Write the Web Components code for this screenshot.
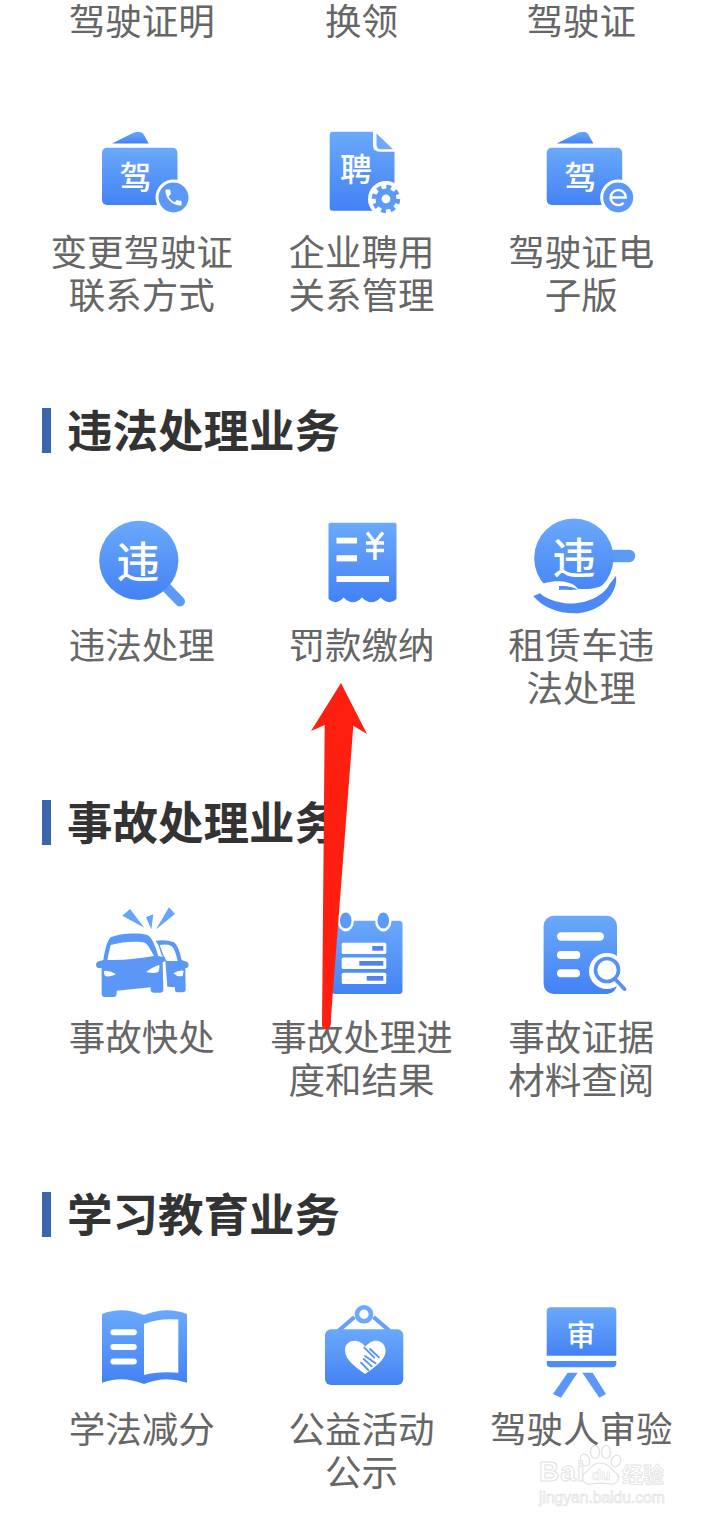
<!DOCTYPE html>
<html lang="zh">
<head>
<meta charset="utf-8">
<title>业务</title>
<style>
html, body { margin: 0; background: #fff; }
body { width: 703px; height: 1519px; overflow: hidden; position: relative; font-family: "Noto Sans CJK SC", "Noto Sans", sans-serif; }
</style>
</head>
<body>
<service-section>
  <service-item>驾驶证明</service-item>
  <service-item>换领</service-item>
  <service-item>驾驶证</service-item>
  <service-item icon="licensePhone">变更驾驶证<br>联系方式</service-item>
  <service-item icon="hire">企业聘用<br>关系管理</service-item>
  <service-item icon="licenseE">驾驶证电<br>子版</service-item>
</service-section>
<service-section heading="违法处理业务">
  <service-item icon="search">违法处理</service-item>
  <service-item icon="receipt">罚款缴纳</service-item>
  <service-item icon="hand">租赁车违<br>法处理</service-item>
</service-section>
<service-section heading="事故处理业务">
  <service-item icon="cars">事故快处</service-item>
  <service-item icon="calendar">事故处理进<br>度和结果</service-item>
  <service-item icon="evidence">事故证据<br>材料查阅</service-item>
</service-section>
<service-section heading="学习教育业务">
  <service-item icon="book">学法减分</service-item>
  <service-item icon="heart">公益活动<br>公示</service-item>
  <service-item icon="board">驾驶人审验</service-item>
</service-section>
<baidu-mark></baidu-mark>
<red-arrow></red-arrow>

<script>
// icons are drawn on a 100x100 box, overflow is left visible
const W = "#fff";
const glyph = (t, x, y, size) => `<text x="${x}" y="${y}" font-size="${size}" font-weight="500" fill="${W}" text-anchor="middle" dominant-baseline="central" font-family="'Noto Sans CJK SC', sans-serif">${t}</text>`;
const wallet = (dx, badge) => `<g transform="translate(${dx} 0)">
  <path fill="url(#g)" d="M20 23.5 L42 12.6 Q49 10 52 15 L56.7 23.5 Z"/>
  <rect x="10" y="27.7" width="75.5" height="57.3" rx="5" fill="url(#g)"/>
  ${glyph("驾", 43.5, 55, 32)}
  <circle cx="81.5" cy="77.5" r="18" fill="${W}"/>
  <circle cx="81.5" cy="77.5" r="15" fill="#5b98f7"/>
  ${badge}
</g>`;

const ICONS = {
  licensePhone: wallet(0, `<path fill="${W}" transform="translate(70.7 66.7) scale(.9)" d="M6.62 10.79c1.44 2.83 3.76 5.14 6.59 6.59l2.2-2.2c.27-.27.67-.36 1.02-.24 1.12.37 2.33.57 3.57.57.55 0 1 .45 1 1V20c0 .55-.45 1-1 1-9.39 0-17-7.61-17-17 0-.55.45-1 1-1h3.5c.55 0 1 .45 1 1 0 1.25.2 2.45.57 3.57.11.35.03.74-.25 1.02l-2.2 2.2z"/>`),
  licenseE: wallet(5.7, `<path fill="none" stroke="${W}" stroke-width="2.4" d="M74 77.5 H89 A7.5 7.5 0 1 0 86.9 82.8"/>`),
  hire: `<path fill="url(#g)" d="M20.7 11.7 H61 V25 Q61 31.7 67.7 31.7 H82.5 V87.7 Q82.5 90.7 79.5 90.7 H20.7 Q17.7 90.7 17.7 87.7 V14.7 Q17.7 11.7 20.7 11.7 Z"/>
    <path fill="#6aa9fb" d="M64.5 13.5 L81 29.3 H69 Q64.5 29.3 64.5 24.8 Z"/>
    ${glyph("聘", 44, 46.7, 32)}
    <circle cx="74" cy="79" r="18" fill="${W}"/>
    <circle cx="74" cy="79" r="10.5" fill="#5c9af8"/>
    <circle cx="74" cy="79" r="12" fill="none" stroke="#5c9af8" stroke-width="4.5" stroke-dasharray="4.7 4.72"/>
    <circle cx="74" cy="79" r="4.4" fill="${W}"/>`,
  search: `<path d="M74 74 L88 88.5" stroke="#5c9af8" stroke-width="10" stroke-linecap="round"/>
    <circle cx="46.8" cy="47.3" r="39.6" fill="url(#g)"/>
    ${glyph("违", 46, 46, 43)}`,
  receipt: `<path fill="url(#g)" d="M18 9.7 H83 Q84.5 9.7 84.5 11.2 V86 Q77 93 68.7 84.5 Q59.5 94 50 84.5 Q41 94 31.6 84.5 Q24 93 16.5 86 V11.2 Q16.5 9.7 18 9.7 Z"/>
    <rect x="24.5" y="24.7" width="20.5" height="5.8" fill="${W}"/>
    <rect x="24.5" y="42.2" width="20.5" height="6.2" fill="${W}"/>
    <rect x="24.5" y="63" width="52.5" height="6" fill="${W}"/>
    <path fill="none" stroke="${W}" stroke-width="3.4" d="M55 19.5 L63 29.5 L71 19.5 M54 30 H72 M54 37.5 H72 M63 29.5 V47"/>`,
  hand: `<path d="M76 43 H98" stroke="#5c9af8" stroke-width="12.5" stroke-linecap="round"/>
    <circle cx="42.8" cy="45" r="39.6" fill="url(#g)"/>
    ${glyph("违", 43, 42, 43)}
    <path fill="${W}" d="M0.7 75.3 C10.7 70.3 20.7 67.7 29 68.3 C39 69 44 72 46.7 75.7 C57.3 77 69 75.3 77.3 68.7 L90.7 58.7 V110 H-5 Z"/>
    <path fill="#4f8cf6" d="M28 73 C36 72.5 44 74.5 46.7 76.5 C40 77.5 33 76.5 28 77 Z"/>
    <path fill="#4c89f5" d="M2.3 83 C14 97 34 102 50.7 99.7 C70.7 97 87.3 80.3 85 62.7 L78 72 C70.7 85.3 50.7 92 34 90.3 C24 88.7 14 85.3 9 80.3 Z"/>`,
  cars: `<g fill="#5a97f6" transform="translate(-2 -5) scale(.3333)">
      <path fill="#66a5fa" d="M97 47 L120 27 L163 83 Z M168 52 L190 43 L184 88 Z M237 22 L255 42 L198 88 Z"/>
      <path fill-rule="evenodd" d="M197 122 Q230 118 252 127 Q265 135 275 180 L292 186 Q300 195 292 203 L286 205 L287 268 Q287 277 278 277 L262 277 Q255 277 255 270 L255 262 L232 260 L226 183 L215 165 L205 135 Z M209 135 Q235 130 247 140 Q256 150 263 183 L230 183 L220 165 Z M250 220 Q265 210 281 212 L278 228 Q262 232 250 220 Z"/>
      <path fill-rule="evenodd" d="M62 112 C90 100 140 97 172 105 C185 110 195 135 205 168 L222 172 Q230 180 222 186 L218 186 L220 270 Q220 278 210 278 L190 278 Q182 278 182 268 L182 262 L80 272 L80 282 Q80 291 70 291 L45 291 Q35 291 35 281 L35 205 L22 203 Q14 195 22 185 L40 180 C45 150 50 125 62 112 Z M62 135 C95 125 140 122 165 128 C175 135 185 155 192 168 C150 175 100 182 52 180 C55 165 58 150 62 135 Z M42 213 Q60 210 78 223 Q60 232 45 228 Q40 220 42 213 Z M208 195 Q190 200 168 216 Q190 222 205 216 Q210 205 208 195 Z"/>
    </g>`,
  calendar: `<rect x="19.7" y="15.7" width="70.8" height="73.3" rx="3.5" fill="url(#g)"/>
    <ellipse cx="33.7" cy="15.5" rx="8.2" ry="11" fill="${W}"/><ellipse cx="71.3" cy="15.5" rx="8.2" ry="11" fill="${W}"/>
    <ellipse cx="33.7" cy="15.5" rx="5.8" ry="8" fill="#5c9af8"/><ellipse cx="71.3" cy="15.5" rx="5.8" ry="8" fill="#5c9af8"/>
    <g fill="${W}"><rect x="29.7" y="37.7" width="44.6" height="11.3" rx="1.5"/><rect x="29.7" y="52.5" width="44.6" height="11.5" rx="1.5"/><rect x="29.7" y="67.7" width="44.6" height="11.3" rx="1.5"/></g>
    <g fill="#5083ee"><rect x="60.3" y="41" width="11" height="4.7"/><rect x="47.3" y="56" width="24" height="4.7"/><rect x="54.7" y="71" width="16.6" height="4.7"/></g>`,
  evidence: `<rect x="12.6" y="10.7" width="73.4" height="78.3" rx="10" fill="url(#g)"/>
    <g fill="${W}"><rect x="26" y="27.3" width="47" height="8.4" rx="4.2"/><rect x="26" y="46" width="23.3" height="8" rx="4"/><rect x="26" y="64.3" width="23" height="8" rx="4"/></g>
    <circle cx="76" cy="66" r="18" fill="${W}"/>
    <circle cx="76" cy="65" r="11.5" fill="${W}" stroke="#5590f6" stroke-width="3.6"/>
    <path d="M84.5 74.5 L93.5 84" stroke="#5590f6" stroke-width="3.8" stroke-linecap="round"/>`,
  book: `<path fill="url(#g)" d="M10 17 Q30 9 52 18 Q74 9 95 17 V85.7 Q74 78 52 87 Q30 78 10 85.7 Z"/>
    <path fill="${W}" d="M52 27 Q66 21 86.3 22.5 V75.7 Q66 74 52 78 Z"/>
    <g fill="${W}"><rect x="18.4" y="32.3" width="26.4" height="6" rx="3"/><rect x="18.4" y="47" width="26.4" height="6" rx="3"/><rect x="18.4" y="61.5" width="26.4" height="6" rx="3"/></g>`,
  heart: `<path d="M42.5 20 L24 36 M61.5 20 L80 36" stroke="#659ff9" stroke-width="4.2"/>
    <circle cx="52" cy="17.3" r="7" fill="${W}" stroke="#6aa9fb" stroke-width="4.6"/>
    <rect x="13" y="32.3" width="78.3" height="55.7" rx="6" fill="url(#g)"/>
    <g transform="translate(3 -2) scale(.3333)">
      <path fill="${W}" d="M150 237 C120 215 90 195 90 165 C90 145 105 137 120 137 C135 137 148 150 150 155 C160 145 170 137 183 137 C200 137 212 150 212 168 C212 195 175 220 150 237 Z"/>
      <path fill="none" stroke="#5792f7" stroke-width="5.5" stroke-linecap="round" d="M148 158 L178 188 M165 162 L192 187 M150 183 L182 205 M138 203 L160 225 M146 192 L170 214"/>
    </g>`,
  board: `<path fill="url(#g)" d="M19.7 10.3 H81.3 Q85.3 10.3 85.3 14.3 V58.7 H15.7 V14.3 Q15.7 10.3 19.7 10.3 Z"/>
    ${glyph("审", 50, 35.5, 29)}
    <path fill="#4f8cf6" d="M15.7 64 H85.3 V66.3 Q85.3 70.3 81.3 70.3 H19.7 Q15.7 70.3 15.7 66.3 Z"/>
    <path fill="#5a97f6" d="M36.7 75.7 H46.6 L30 100.7 L22 97 Z M51.3 75.7 H61.6 L75 97 L68.3 100.7 Z"/>`
};

class ServiceIcon extends HTMLElement {
  connectedCallback() {
    this.attachShadow({ mode: "open" }).innerHTML = `
      <style>
      :host { display: block; width: 100px; height: 100px; }
      svg { display: block; overflow: visible; }
      </style>
      <svg width="100" height="100" viewBox="0 0 100 100">
        <defs><linearGradient id="g" x1="0" y1="0" x2="0" y2="1"><stop offset="0" stop-color="#6aa9fb"/><stop offset="1" stop-color="#4482f5"/></linearGradient></defs>
        ${ICONS[this.getAttribute("name")] || ""}
      </svg>`;
  }
}
customElements.define("service-icon", ServiceIcon);

class ServiceItem extends HTMLElement {
  connectedCallback() {
    const name = this.getAttribute("icon");
    this.attachShadow({ mode: "open" }).innerHTML = `
      <style>
      :host { display: flex; flex-direction: column; align-items: center; text-align: center; font-size: 36.5px; line-height: 43px; color: #666; white-space: nowrap; }
      service-icon { margin-bottom: 11px; }
      .label { margin: -2px 0 2px; }
      </style>
      ${name ? `<service-icon name="${name}"></service-icon>` : ""}
      <div class="label"><slot></slot></div>`;
  }
}
customElements.define("service-item", ServiceItem);

class ServiceSection extends HTMLElement {
  connectedCallback() {
    const heading = this.getAttribute("heading");
    this.attachShadow({ mode: "open" }).innerHTML = `
      <style>
      :host { display: block; padding: 0 12px 90px 32px; }
      :host(:first-of-type) { padding-bottom: 91px; }
      h2 { margin: 0 0 60px 10px; height: 45px; display: flex; align-items: center; gap: 16px; font-size: 45.5px; line-height: 45px; font-weight: 700; color: #333; }
      h2::before { content: ""; width: 9px; height: 45px; background: #3a66ab; }
      h2 span { padding-bottom: 4px; }
      .grid { display: grid; grid-template-columns: repeat(3, 219.7px); row-gap: 77px; align-items: start; }
      </style>
      ${heading ? `<h2><span>${heading}</span></h2>` : ""}
      <div class="grid"><slot></slot></div>`;
  }
}
customElements.define("service-section", ServiceSection);

// screenshot overlay: hand drawn arrow
class RedArrow extends HTMLElement {
  connectedCallback() {
    this.attachShadow({ mode: "open" }).innerHTML = `
      <style>
      :host { position: absolute; left: 0; top: 0; width: 703px; height: 1519px; pointer-events: none; }
      svg { display: block; }
      </style>
      <svg width="703" height="1519" viewBox="0 0 703 1519">
        <path fill="#fe1f10" d="M341 683 L367 734 L353.3 725.7 L332.3 1000 L330.5 1026 Q326 1033 322 1026 L324.7 725 L311 731 Z"/>
      </svg>`;
  }
}
customElements.define("red-arrow", RedArrow);

// watermark bottom right
class BaiduMark extends HTMLElement {
  connectedCallback() {
    this.attachShadow({ mode: "open" }).innerHTML = `
      <style>
      :host { position: absolute; left: 538px; top: 1443px; width: 130px; height: 62px; font-family: "Liberation Sans", sans-serif; color: #fff; -webkit-text-stroke: 1px #e2e2e2; }
      .b { position: absolute; left: 1px; top: 14px; font-size: 28px; line-height: 30px; font-weight: 700; letter-spacing: 1px; }
      .j { position: absolute; left: 1px; top: 45px; font-size: 15.6px; line-height: 20px; -webkit-text-stroke: .7px #e2e2e2; }
      .c { position: absolute; left: 84px; top: 17px; font: 700 21px/26px "Noto Sans CJK SC", sans-serif; -webkit-text-stroke: .8px #e2e2e2; }
      .d { position: absolute; left: 54px; top: 24px; font-size: 15px; line-height: 16px; font-weight: 700; -webkit-text-stroke: .6px #e2e2e2; }
      svg { position: absolute; left: 0; top: 0; }
      </style>
      <svg width="130" height="44" viewBox="0 0 130 44" fill="#fff" stroke="#e2e2e2" stroke-width="1.2">
        <ellipse cx="47" cy="17" rx="4.5" ry="6" transform="rotate(-25 47 17)"/>
        <ellipse cx="57" cy="9" rx="4.5" ry="6.5"/>
        <ellipse cx="68" cy="9" rx="4.5" ry="6.5"/>
        <ellipse cx="78" cy="18" rx="4.5" ry="6" transform="rotate(25 78 18)"/>
        <path d="M62 20 C54 20 52 26 47 30 C41 35 46 42 53 41 C59 40 66 40 72 41 C79 42 84 35 78 30 C73 26 70 20 62 20 Z"/>
      </svg>
      <span class="b">Bai</span><span class="d">du</span><span class="c">经验</span>
      <span class="j">jingyan.baidu.com</span>`;
  }
}
customElements.define("baidu-mark", BaiduMark);
</script>
</body>
</html>
